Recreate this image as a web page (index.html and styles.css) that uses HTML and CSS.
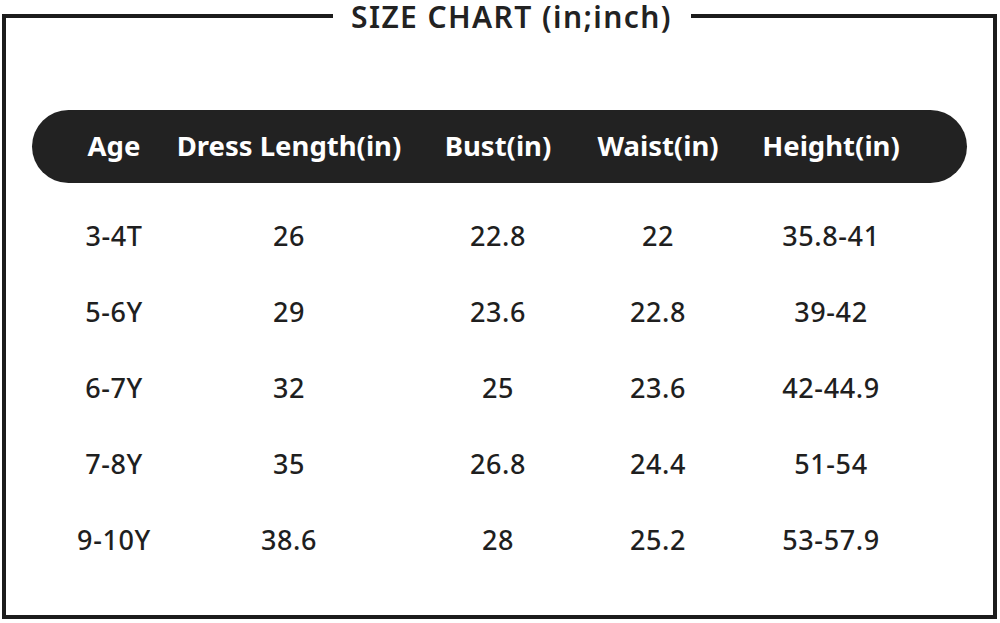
FILE: index.html
```html
<!DOCTYPE html>
<html>
<head>
<meta charset="utf-8">
<link rel="stylesheet" href="styles.css">
</head>
<body>
<div class="chart">
  <h1 class="title">SIZE CHART (in;inch)</h1>
  <div class="grid head">
    <div>Age</div><div>Dress Length(in)</div><div>Bust(in)</div><div>Waist(in)</div><div>Height(in)</div>
  </div>
  <div class="rows">
    <div class="grid row"><div>3-4T</div><div>26</div><div>22.8</div><div>22</div><div>35.8-41</div></div>
    <div class="grid row"><div>5-6Y</div><div>29</div><div>23.6</div><div>22.8</div><div>39-42</div></div>
    <div class="grid row"><div>6-7Y</div><div>32</div><div>25</div><div>23.6</div><div>42-44.9</div></div>
    <div class="grid row"><div>7-8Y</div><div>35</div><div>26.8</div><div>24.4</div><div>51-54</div></div>
    <div class="grid row"><div>9-10Y</div><div>38.6</div><div>28</div><div>25.2</div><div>53-57.9</div></div>
  </div>
</div>
</body>
</html>
```
FILE: styles.css
```css
html, body {
  margin: 0;
  padding: 0;
  background: #ffffff;
}
body {
  font-family: "Noto Sans", "Open Sans", sans-serif;
  color: #1f1f1f;
}
.chart {
  position: relative;
  box-sizing: border-box;
  margin: 14px 3px 0 2px;
  height: 605px;
  border: 4px solid #1c1c1c;
  padding: 92px 26px 0 26px;
}
.title {
  position: absolute;
  top: -16px;
  left: 327px;
  margin: 0;
  padding: 0 19px 0 18px;
  background: #ffffff;
  font-size: 30px;
  font-weight: 600;
  letter-spacing: 1.4px;
  line-height: 30px;
  color: #222222;
  white-space: nowrap;
}
.grid {
  display: grid;
  grid-template-columns: 164px 186px 232px 88px 258px;
  justify-items: center;
  align-items: center;
  white-space: nowrap;
}
.head {
  height: 73px;
  background: #222222;
  border-radius: 37px;
  color: #ffffff;
  font-size: 27.5px;
  font-weight: 700;
  line-height: 32px;
  padding-bottom: 2px;
  box-sizing: border-box;
}
.rows {
  margin-top: 14px;
}
.row {
  height: 76px;
  font-size: 27px;
  font-weight: 500;
  letter-spacing: 0.6px;
}
```
